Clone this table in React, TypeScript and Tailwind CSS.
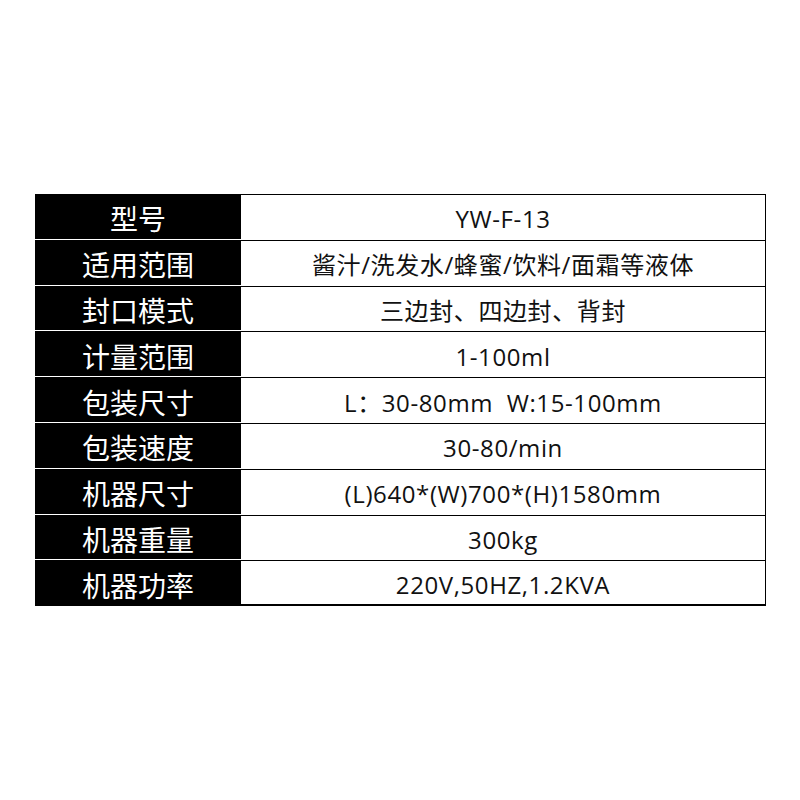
const ROWS: [string, string][] = [
  ['型号', 'YW-F-13'],
  ['适用范围', '酱汁/洗发水/蜂蜜/饮料/面霜等液体'],
  ['封口模式', '三边封、四边封、背封'],
  ['计量范围', '1-100ml'],
  ['包装尺寸', 'L：30-80mm  W:15-100mm'],
  ['包装速度', '30-80/min'],
  ['机器尺寸', '(L)640*(W)700*(H)1580mm'],
  ['机器重量', '300kg'],
  ['机器功率', '220V,50HZ,1.2KVA'],
]

const FONT = { fontFamily: '"Open Sans", "Noto Sans CJK SC", sans-serif' }

export default function App() {
  return (
    <div className="w-[800px] h-[800px] bg-white pt-[194px] pl-[35px]">
      <div className="w-[731px] flex flex-col">
        {ROWS.map(([label, value], i) => {
          const last = i === ROWS.length - 1
          return (
            <div key={label} className="flex h-[45.8px]">
              <div
                className={`w-[206px] bg-black text-white flex items-center justify-center text-[28px] leading-none pt-[4px] ${last ? '' : 'border-b border-white'}`}
                style={{ fontFamily: '"Noto Sans CJK SC", sans-serif' }}
              >
                {label}
              </div>
              <div
                className={`flex-1 flex items-center justify-center whitespace-pre text-[24px] tracking-[0.6px] leading-none pt-[4px] text-[#111] border-r-[1.5px] border-t-[1.5px] border-black ${last ? 'border-b-[2px]' : ''}`}
                style={FONT}
              >
                {value}
              </div>
            </div>
          )
        })}
      </div>
    </div>
  )
}
